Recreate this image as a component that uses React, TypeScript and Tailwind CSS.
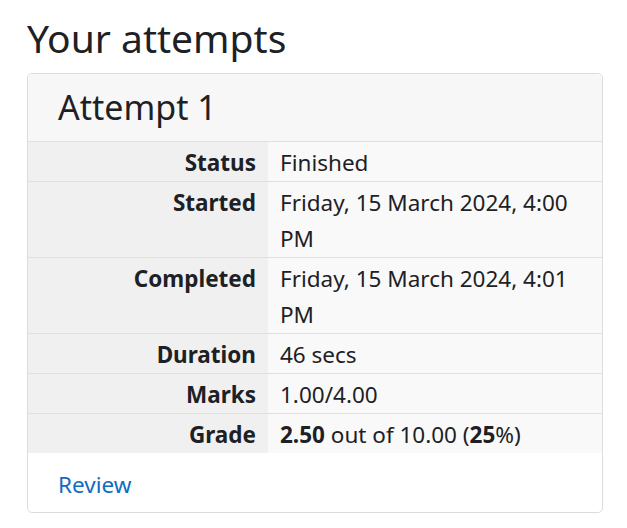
import React from "react";

const rows: { label: string; value: React.ReactNode }[] = [
  { label: "Status", value: "Finished" },
  { label: "Started", value: "Friday, 15 March 2024, 4:00 PM" },
  { label: "Completed", value: "Friday, 15 March 2024, 4:01 PM" },
  { label: "Duration", value: "46 secs" },
  { label: "Marks", value: "1.00/4.00" },
  {
    label: "Grade",
    value: (
      <>
        <b className="font-bold">2.50</b> out of 10.00 (<b className="font-bold">25</b>%)
      </>
    ),
  },
];

export default function App() {
  return (
    <div
      className="min-h-[528px] bg-white px-[27px] pt-[12px] text-[#1d2125]"
      style={{ fontFamily: '"Noto Sans", "Open Sans", sans-serif' }}
    >
      <h2 className="text-[39px] leading-[52px] font-normal">Your attempts</h2>
      <div className="mt-[9px] w-[576px] overflow-hidden rounded-[5px] border border-[#dcdcdc]">
        <div className="border-b border-[#e0e0e0] bg-[#f7f7f7] px-[30px] pt-[12px] pb-[12px]">
          <h3 className="text-[34px] leading-[43px] font-normal">Attempt 1</h3>
        </div>
        <table className="w-full border-collapse text-[22.5px] leading-[36px]">
          <tbody>
            {rows.map((r, i) => (
              <tr
                key={r.label}
                className={i > 0 ? "border-t border-[#e0e0e0]" : ""}
              >
                <th className="w-[240px] bg-[#f0f0f0] pt-[3px] pb-0 pr-[12px] text-right align-top font-bold">
                  {r.label}
                </th>
                <td className="bg-[#f9f9f9] pt-[3px] pb-0 pl-[12px] pr-[12px] align-top">
                  {r.value}
                </td>
              </tr>
            ))}
          </tbody>
        </table>
        <div className="px-[30px] pt-[14px] pb-[9px]">
          <a href="#" className="text-[22.5px] leading-[36px] text-[#0f6cbf]">
            Review
          </a>
        </div>
      </div>
    </div>
  );
}
